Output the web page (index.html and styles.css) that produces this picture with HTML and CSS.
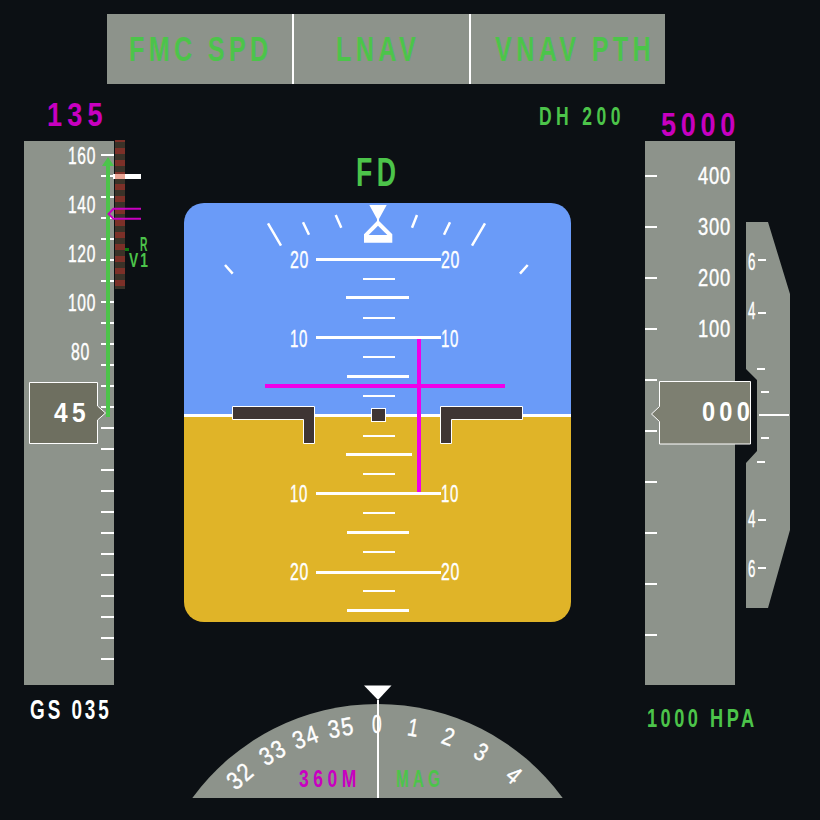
FILE: index.html
```html
<!DOCTYPE html>
<html lang="en">
<head>
<meta charset="utf-8">
<title>Primary Flight Display</title>
<link rel="stylesheet" href="styles.css">
</head>
<body>
<main class="pfd">
  <header class="fma">
    <div class="fma-cell fma-spd"><span>FMC SPD</span></div>
    <div class="fma-cell fma-lat"><span>LNAV</span></div>
    <div class="fma-cell fma-vert"><span>VNAV PTH</span></div>
  </header>

  <div class="readout speed-target"><span>135</span></div>
  <div class="readout dh"><span>DH 200</span></div>
  <div class="readout alt-target"><span>5000</span></div>

  <svg class="tape speed-tape" viewBox="24 141 90 544" width="90" height="544">
    <defs>
      <pattern id="stripes" patternUnits="userSpaceOnUse" x="115" y="142" width="10" height="12">
        <rect class="strip-dark" width="10" height="12"/>
        <rect class="strip-red" y="6" width="10" height="6"/>
      </pattern>
    </defs>
    <rect class="tape-bg" x="24" y="141" width="90" height="544"/>
    <path class="tick" d="M101 155h13M101 176h13M101 197h13M101 218h13M101 239h13M101 260h13M101 281h13M101 302h13M101 323h13M101 344h13M101 365h13M101 386h13M101 407h13M101 428h13M101 449h13M101 470h13M101 491h13M101 512h13M101 533h13M101 554h13M101 575h13M101 596h13M101 617h13M101 638h13M101 659h13"/>
    <text class="tape-num" x="68" y="164" textLength="28" lengthAdjust="spacingAndGlyphs">160</text>
    <text class="tape-num" x="68" y="213" textLength="28" lengthAdjust="spacingAndGlyphs">140</text>
    <text class="tape-num" x="68" y="262" textLength="28" lengthAdjust="spacingAndGlyphs">120</text>
    <text class="tape-num" x="68" y="311" textLength="28" lengthAdjust="spacingAndGlyphs">100</text>
    <text class="tape-num" x="71" y="360" textLength="19" lengthAdjust="spacingAndGlyphs">80</text>
    <rect class="trend" x="106" y="165" width="4" height="252"/>
    <polygon class="trend" points="108,157 114,166 102,166"/>
    <rect class="strip" x="115" y="140" width="10" height="149"/>
    <rect class="mark-white" x="113" y="174" width="28" height="5"/>
    <rect class="mark-pink" x="115" y="174" width="10" height="5"/>
    <path class="bug" d="M141 208.700H113.500L108.500 214L113.500 218.700H141"/>
    <rect class="vspeed-tick" x="125" y="248" width="4" height="3"/>
    <text class="vspeed" x="140" y="251" textLength="9" lengthAdjust="spacingAndGlyphs">R</text>
    <text class="vspeed" x="129" y="267" textLength="21" lengthAdjust="spacingAndGlyphs">V1</text>
    <path class="box" d="M29.500 382.500H97.500V406L105.500 413L97.500 420V443.500H29.500Z"/>
    <text class="box-num" x="54" y="422" textLength="36" lengthAdjust="spacingAndGlyphs">45</text>
  </svg>

  <div class="adi">
    <div class="fd"><span>FD</span></div>
    <svg class="adi-svg" viewBox="184 203 387 419" width="387" height="419">
      <defs>
        <clipPath id="adi-clip"><rect x="184" y="203" width="387" height="419" rx="20"/></clipPath>
      </defs>
      <g clip-path="url(#adi-clip)">
        <rect class="sky" x="184" y="203" width="387" height="212"/>
        <rect class="ground" x="184" y="415" width="387" height="207"/>
        <rect class="horizon" x="184" y="414" width="387" height="3"/>
      </g>
      <path class="roll" d="M225 265L232.700 273.700M268 223.300L281 245.700M303 222.300L309 234.700M335.700 215L341.300 227.700M417 215L412 227.700M450 222.300L444 234.700M485 223.300L472 245.700M527.700 265L520 273.700"/>
      <polygon class="pointer" points="369.300,205 386.700,205 379,219 379,221 392.300,234.300 392.300,242.700 364,242.700 364,234.300 377,221 377,219"/>
      <polygon class="sky" points="378,225.700 368.700,235 387.300,235"/>
      <path class="pitch-major" d="M316 259.500H441M316 337.500H441M316 493.500H441M316 572.500H441"/>
      <path class="pitch-mid" d="M346 297.500H409M347 376.500H409M346 454.500H412M347 532.500H409M347 610.500H409"/>
      <path class="pitch-minor" d="M363 279H395M363 318H395M363 357H395M363 396H395M363 436H395M363 474H395M363 513H395M363 552H395M363 591H395"/>
      <text class="pitch-num" x="290" y="268" textLength="19" lengthAdjust="spacingAndGlyphs">20</text>
      <text class="pitch-num" x="441" y="268" textLength="19" lengthAdjust="spacingAndGlyphs">20</text>
      <text class="pitch-num" x="290" y="347" textLength="18" lengthAdjust="spacingAndGlyphs">10</text>
      <text class="pitch-num" x="441" y="347" textLength="18" lengthAdjust="spacingAndGlyphs">10</text>
      <text class="pitch-num" x="290" y="502" textLength="18" lengthAdjust="spacingAndGlyphs">10</text>
      <text class="pitch-num" x="441" y="502" textLength="18" lengthAdjust="spacingAndGlyphs">10</text>
      <text class="pitch-num" x="290" y="580" textLength="19" lengthAdjust="spacingAndGlyphs">20</text>
      <text class="pitch-num" x="441" y="580" textLength="19" lengthAdjust="spacingAndGlyphs">20</text>
      <rect class="fd-bar" x="417" y="339" width="4" height="153"/>
      <rect class="fd-bar" x="265" y="384" width="240" height="4"/>
      <path class="wing" d="M232.500 406.500H314.500V443.500H303.500V419.500H232.500Z"/>
      <path class="wing" d="M522.500 406.500H440.500V443.500H451.500V419.500H522.500Z"/>
      <rect class="wing" x="371.500" y="408.500" width="14" height="13"/>
    </svg>
  </div>

  <svg class="tape alt-tape" viewBox="645 141 90 544" width="90" height="544">
    <rect class="tape-bg" x="645" y="141" width="90" height="544"/>
    <path class="tick" d="M645 176h12M645 227h12M645 278h12M645 329h12M645 380h12M645 431h12M645 482h12M645 533h12M645 584h12M645 635h12"/>
    <text class="tape-num" x="698" y="184" textLength="33" lengthAdjust="spacingAndGlyphs">400</text>
    <text class="tape-num" x="698" y="235" textLength="33" lengthAdjust="spacingAndGlyphs">300</text>
    <text class="tape-num" x="698" y="286" textLength="33" lengthAdjust="spacingAndGlyphs">200</text>
    <text class="tape-num" x="698" y="337" textLength="33" lengthAdjust="spacingAndGlyphs">100</text>
    <path class="box box-alt" d="M659.500 381.500H750.500V444H659.500V421.500L651.500 414L659.500 406.500Z"/>
    <text class="box-num" x="702" y="421" textLength="52" lengthAdjust="spacingAndGlyphs">000</text>
  </svg>

  <svg class="vsi" viewBox="746 141 44 544" width="44" height="544">
    <polygon class="tape-bg" points="746,222 768,222 790,294 790,530 768,608 746,608 746,463 757,451 757,380 746,369"/>
    <path class="tick" d="M758 260h8M758 313h8M757 369h8M761 392h8M759 415h30M761 438h8M757 462h8M758 520h8M758 568h8"/>
    <text class="vsi-num" x="748" y="270" textLength="8" lengthAdjust="spacingAndGlyphs">6</text>
    <text class="vsi-num" x="748" y="319" textLength="8" lengthAdjust="spacingAndGlyphs">4</text>
    <text class="vsi-num" x="748" y="527" textLength="8" lengthAdjust="spacingAndGlyphs">4</text>
    <text class="vsi-num" x="748" y="577" textLength="8" lengthAdjust="spacingAndGlyphs">6</text>
  </svg>

  <div class="readout gs"><span>GS 035</span></div>

  <svg class="compass" viewBox="184 685 387 115" width="387" height="115">
    <path class="tape-bg" d="M192.300 798A229.400 229.400 0 0 1 562.700 798Z"/>
    <path class="lubber" d="M378 700V798"/>
    <polygon class="pointer" points="364,685.500 391.500,685.500 378,700"/>
    <g class="heading">
      <text transform="rotate(-41 377.500 933.400)" x="377.500" y="733" textLength="27" lengthAdjust="spacingAndGlyphs">32</text>
      <text transform="rotate(-30 377.500 933.400)" x="377.500" y="733" textLength="27" lengthAdjust="spacingAndGlyphs">33</text>
      <text transform="rotate(-20 377.500 933.400)" x="377.500" y="733" textLength="27" lengthAdjust="spacingAndGlyphs">34</text>
      <text transform="rotate(-10 377.500 933.400)" x="377.500" y="733" textLength="27" lengthAdjust="spacingAndGlyphs">35</text>
      <text x="377.500" y="733" textLength="11" lengthAdjust="spacingAndGlyphs">0</text>
      <text transform="rotate(10 377.500 933.400)" x="377.500" y="733" textLength="12" lengthAdjust="spacingAndGlyphs">1</text>
      <text transform="rotate(20 377.500 933.400)" x="377.500" y="733" textLength="13" lengthAdjust="spacingAndGlyphs">2</text>
      <text transform="rotate(30 377.500 933.400)" x="377.500" y="733" textLength="13" lengthAdjust="spacingAndGlyphs">3</text>
      <text transform="rotate(41 377.500 933.400)" x="377.500" y="733" textLength="13" lengthAdjust="spacingAndGlyphs">4</text>
    </g>
    <text class="hdg-sel" x="299" y="787" textLength="62" lengthAdjust="spacingAndGlyphs">360M</text>
    <text class="hdg-mag" x="396" y="787" textLength="48" lengthAdjust="spacingAndGlyphs">MAG</text>
  </svg>

  <div class="readout baro"><span>1000 HPA</span></div>
</main>
</body>
</html>
```
FILE: styles.css
```css
html, body {
  margin: 0;
  padding: 0;
  background: #0c1014;
}

.pfd {
  display: grid;
  width: 820px;
  height: 820px;
  overflow: hidden;
  grid-template-columns: 24px 90px 70px 387px 74px 90px 11px 44px 30px;
  grid-template-rows: 14px 70px 57px 544px 135px;
  font-family: "Liberation Sans", sans-serif;
}

.fma {
  grid-column: 1 / -1;
  grid-row: 2;
  display: flex;
  width: 558px;
  height: 70px;
  margin-left: 107px;
  background: #8d938b;
  color: #4cc44a;
  font-size: 35px;
  font-weight: 700;
  line-height: 70px;
}

.fma-cell {
  box-sizing: border-box;
  white-space: nowrap;
}

.fma-cell span,
.readout span,
.fd span {
  display: inline-block;
  transform-origin: left center;
}

.fma-cell span {
  transform: scaleX(0.72);
  letter-spacing: 6px;
}

.fma-spd { width: 187px; padding-left: 22px; border-right: 2px solid #fff; }
.fma-lat { width: 177px; padding-left: 42px; border-right: 2px solid #fff; }
.fma-vert { width: 194px; padding-left: 24px; }

.readout {
  white-space: nowrap;
  line-height: 1;
}

.speed-target {
  grid-column: 2 / 4;
  grid-row: 3;
  padding: 14px 0 0 23px;
  color: #c800c0;
  font-size: 33px;
  font-weight: 700;
}

.speed-target span {
  transform: scaleX(0.82);
  letter-spacing: 6.400px;
}

.dh {
  grid-column: 4 / 6;
  grid-row: 3;
  padding: 20px 0 0 355px;
  color: #4cc44a;
  font-size: 25px;
  font-weight: 700;
}

.dh span {
  transform: scaleX(0.7);
  letter-spacing: 6.300px;
}

.alt-target {
  grid-column: 6 / 9;
  grid-row: 3;
  padding: 24px 0 0 16px;
  color: #c800c0;
  font-size: 33px;
  font-weight: 700;
}

.alt-target span {
  transform: scaleX(0.82);
  letter-spacing: 5.700px;
}

.tape { display: block; overflow: visible; }
.speed-tape { grid-column: 2; grid-row: 4; }
.alt-tape { grid-column: 6; grid-row: 4; }
.vsi { grid-column: 8; grid-row: 4; display: block; overflow: visible; }

.tape-bg { fill: #8d938b; }
.tick { stroke: #fff; stroke-width: 2; fill: none; }

.tape-num, .vsi-num, .pitch-num {
  fill: #fff;
  stroke: #fff;
  stroke-width: 0.400;
  font-size: 23px;
  letter-spacing: 1px;
}

.trend { fill: #4cc44a; }
.strip { fill: url(#stripes); }
.strip-dark { fill: #3a3228; }
.strip-red { fill: #7c3028; }
.mark-white { fill: #fff; }
.mark-pink { fill: #eaa595; }
.bug { fill: none; stroke: #c800c0; stroke-width: 2; }
.vspeed-tick { fill: #0f7a10; }
.vspeed { fill: #4cc44a; font-size: 20px; font-weight: 700; letter-spacing: 3px; }

.box { fill: #6e6f60; stroke: #fff; stroke-width: 1; }
.box-alt { fill: #7d7f71; }
.box-num { fill: #fff; font-size: 28px; font-weight: 700; letter-spacing: 5px; }

.adi {
  grid-column: 4;
  grid-row: 4;
  display: flex;
  flex-direction: column;
}

.fd {
  height: 62px;
  padding-top: 11px;
  box-sizing: border-box;
  padding-left: 172px;
  color: #4cc44a;
  font-size: 41px;
  font-weight: 700;
  line-height: 40px;
}

.fd span {
  transform: scaleX(0.65);
  letter-spacing: 7px;
}

.adi-svg { display: block; flex: none; }

.sky { fill: #6a9bf8; }
.ground { fill: #e0b428; }
.horizon { fill: #fff; }
.roll { stroke: #fff; stroke-width: 2.500; fill: none; }
.pointer { fill: #fff; }
.pitch-major, .pitch-mid { stroke: #fff; stroke-width: 3; fill: none; }
.pitch-minor { stroke: #fff; stroke-width: 2; fill: none; }
.fd-bar { fill: #f000e8; }
.wing { fill: #3f3534; stroke: #fff; stroke-width: 1; }

.gs {
  grid-column: 2 / 4;
  grid-row: 5;
  padding: 12px 0 0 6px;
  color: #fff;
  font-size: 27px;
  font-weight: 700;
}

.gs span {
  transform: scaleX(0.7);
  letter-spacing: 4.200px;
}

.compass {
  grid-column: 4;
  grid-row: 5;
  display: block;
  overflow: visible;
}

.lubber { stroke: #fff; stroke-width: 2; fill: none; }
.heading text {
  fill: #fff;
  stroke: #fff;
  stroke-width: 0.400;
  font-size: 25px;
  text-anchor: middle;
  letter-spacing: 2px;
}
.hdg-sel, .hdg-mag { font-size: 23px; font-weight: 700; letter-spacing: 6px; }
.hdg-sel { fill: #c800c0; }
.hdg-mag { fill: #4cc44a; }

.baro {
  grid-column: 6 / 9;
  grid-row: 5;
  padding: 20px 0 0 2px;
  color: #4cc44a;
  font-size: 26px;
  font-weight: 700;
}

.baro span {
  transform: scaleX(0.7);
  letter-spacing: 5px;
}
```
